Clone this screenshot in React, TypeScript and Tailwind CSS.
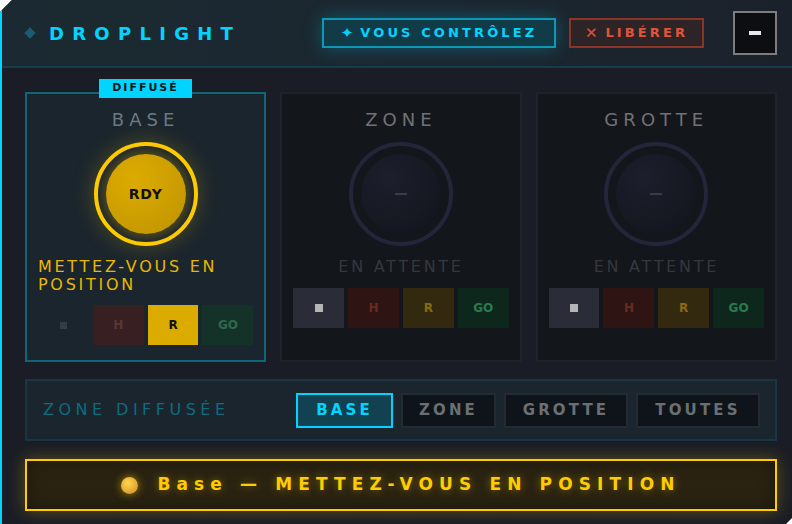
const font = { fontFamily: '"DejaVu Sans", "Liberation Sans", sans-serif' };

type Zone = {
  name: string;
  active: boolean;
};

const zones: Zone[] = [
  { name: "BASE", active: true },
  { name: "ZONE", active: false },
  { name: "GROTTE", active: false },
];

const ZoneCard = ({ zone }: { zone: Zone }) => {
  if (zone.active) {
    return (
      <div className="relative flex flex-col items-center border-2 border-[#0e6678] bg-[#1a252d] px-[11px] pt-4 pb-[15px]">
        <div className="absolute -top-[15px] left-[72px] flex h-[19px] w-[93px] items-center justify-center bg-[#00d4ff] text-[11px] font-bold tracking-[0.18em] text-[#08161c]">
          DIFFUSÉ
        </div>
        <div className="h-5 text-[18px] leading-5 tracking-[0.28em] text-[#6b7880]">{zone.name}</div>
        <div className="mt-3 flex h-[104px] w-[104px] items-center justify-center rounded-full border-4 border-[#ffcc00] shadow-[0_0_22px_rgba(255,204,0,0.25)]">
          <div className="flex h-[80px] w-[80px] items-center justify-center rounded-full bg-[radial-gradient(circle_at_35%_30%,#dcab00,#bf9300)] shadow-[0_0_10px_4px_rgba(180,140,0,0.35)]">
            <span className="text-[14px] font-bold tracking-[0.06em] text-[#111]">RDY</span>
          </div>
        </div>
        <div className="mt-3 flex w-full justify-center">
          <div className="text-left text-[16px] leading-[18px] tracking-[0.17em] text-[#e8b800]">
            METTEZ-VOUS EN POSITION
          </div>
        </div>
        <div className="mt-[11px] grid w-full grid-cols-4 gap-1">
          <div className="flex h-10 items-center justify-center">
            <div className="h-[7px] w-[7px] bg-[#353c44]" />
          </div>
          <div className="flex h-10 items-center justify-center bg-[#382022] text-[12px] font-bold text-[#5c3434]">H</div>
          <div className="flex h-10 items-center justify-center bg-[#dcab00] text-[12px] font-bold text-[#111]">R</div>
          <div className="flex h-10 items-center justify-center bg-[#153229] text-[12px] font-bold text-[#2d6a4c]">GO</div>
        </div>
      </div>
    );
  }
  return (
    <div className="flex flex-col items-center border-2 border-[#1f2228] bg-[#13161b] px-[11px] pt-4 pb-[15px]">
      <div className="h-5 text-[18px] leading-5 tracking-[0.28em] text-[#707275]">{zone.name}</div>
      <div className="mt-3 flex h-[104px] w-[104px] items-center justify-center rounded-full border-4 border-[#23263a]">
        <div className="flex h-[80px] w-[80px] items-center justify-center rounded-full bg-[radial-gradient(circle_at_35%_30%,#1c1f2c,#12141b)]">
          <div className="h-[2px] w-3 bg-[#3a3d46]" />
        </div>
      </div>
      <div className="mt-3 flex w-full justify-center">
        <div className="text-left text-[16px] leading-[18px] tracking-[0.17em] text-[#35383d]">EN ATTENTE</div>
      </div>
      <div className="mt-3 grid w-full grid-cols-4 gap-1">
        <div className="flex h-10 items-center justify-center bg-[#2a2d38]">
          <div className="h-2 w-2 bg-[#b5b5b8]" />
        </div>
        <div className="flex h-10 items-center justify-center bg-[#2e1413] text-[12px] font-bold text-[#6a2a22]">H</div>
        <div className="flex h-10 items-center justify-center bg-[#33290f] text-[12px] font-bold text-[#8a6a12]">R</div>
        <div className="flex h-10 items-center justify-center bg-[#0d271d] text-[12px] font-bold text-[#2b7a4c]">GO</div>
      </div>
    </div>
  );
};

const BarButton = ({ label, active, width }: { label: string; active?: boolean; width: string }) => (
  <div
    className={
      active
        ? `${width} flex h-[35px] items-center justify-center border-2 border-[#00d4ff] bg-[#124151] text-[15px] font-bold tracking-[0.21em] text-[#00d4ff]`
        : `${width} flex h-[35px] items-center justify-center border-2 border-[#232b31] bg-[#0e141a] text-[15px] font-bold tracking-[0.21em] text-[#6a6f73]`
    }
  >
    {label}
  </div>
);

export default function App() {
  return (
    <div
      style={font}
      className="relative flex h-[524px] w-[792px] flex-col overflow-hidden border-l-2 border-[#00d4ff] bg-[#1a1d25] [clip-path:polygon(12px_0,100%_0,100%_calc(100%-6px),calc(100%-6px)_100%,0_100%,0_12px)]"
    >
      {/* header */}
      <div className="flex h-[68px] shrink-0 items-center border-b-2 border-[#173d4a] bg-[linear-gradient(90deg,#1b2a32,#1b2730_60%,#1b212a)] pr-[15px] pl-6">
        <div className="h-[8px] w-[8px] rotate-45 bg-[#1a5c72]" />
        <div className="ml-[15px] text-[18px] font-bold tracking-[0.46em] text-[#00d4ff]">DROPLIGHT</div>
        <div className="ml-auto flex h-[30px] w-[234px] items-center justify-center gap-[7px] border-2 border-[#0f98b5] bg-[#123b48] text-[13px] font-bold tracking-[0.24em] text-[#00d4ff] shadow-[0_0_18px_rgba(0,180,220,0.35)]">
          <span className="text-[15px] leading-none tracking-normal">✦</span>
          <span>VOUS CONTRÔLEZ</span>
        </div>
        <div className="ml-[13px] flex h-[30px] w-[135px] items-center justify-center gap-[8px] border-2 border-[#8c3426] bg-[#2d2427] text-[13px] font-bold tracking-[0.24em] text-[#e0553a]">
          <span className="text-[15px] font-normal leading-none tracking-normal">✕</span>
          <span>LIBÉRER</span>
        </div>
        <div className="ml-[29px] flex h-[44px] w-[44px] items-center justify-center border-2 border-[#7d7d7d] bg-[#0d0e12]">
          <div className="h-[4px] w-[12px] bg-[#e8e8e8]" />
        </div>
      </div>

      {/* body */}
      <div className="flex flex-1 flex-col pt-6 pr-[15px] pl-[23px]">
        <div className="grid grid-cols-3 gap-[14px]">
          {zones.map((z) => (
            <ZoneCard key={z.name} zone={z} />
          ))}
        </div>

        <div className="mt-[17px] flex h-[62px] items-center border-2 border-[#163743] bg-[#1a252d] pr-[15px] pl-4">
          <div className="text-[16px] tracking-[0.28em] text-[#0f6b80]">ZONE DIFFUSÉE</div>
          <div className="ml-auto flex gap-2">
            <BarButton label="BASE" active width="w-[97px]" />
            <BarButton label="ZONE" width="w-[95px]" />
            <BarButton label="GROTTE" width="w-[124px]" />
            <BarButton label="TOUTES" width="w-[124px]" />
          </div>
        </div>

        <div className="mt-[18px] flex h-[52px] items-center justify-center gap-[19px] border-2 border-[#ffcc00] bg-[#2a2311] shadow-[0_0_16px_rgba(255,204,0,0.3),inset_0_0_18px_rgba(0,0,0,0.35)]">
          <div className="h-[17px] w-[17px] rounded-full bg-[radial-gradient(circle_at_40%_35%,#ffd84a,#e0a030_70%,#c88a3a)] shadow-[0_0_8px_rgba(255,204,0,0.6)]" />
          <div className="text-[17px] font-bold tracking-[0.36em] text-[#ffcc00] [text-shadow:0_0_8px_rgba(255,204,0,0.45)]">
            Base — METTEZ-VOUS EN POSITION
          </div>
        </div>
      </div>
    </div>
  );
}
